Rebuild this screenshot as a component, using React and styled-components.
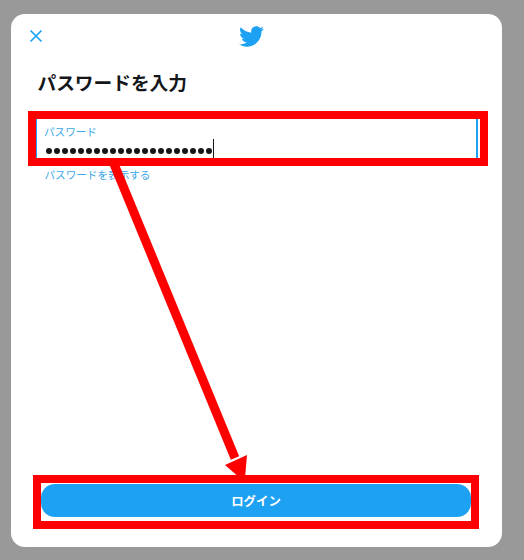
import React from "react";
import styled, { createGlobalStyle } from "styled-components";
import { FaTwitter } from "react-icons/fa";

const Global = createGlobalStyle`
  html, body {
    margin: 0;
    padding: 0;
    background: #999;
    font-family: "Liberation Sans", "Noto Sans CJK JP", sans-serif;
  }
`;

const Page = styled.div`
  position: relative;
  width: 524px;
  height: 560px;
  padding: 14px 22px 13px 11px;
  box-sizing: border-box;
  overflow: hidden;
  background: #999;
`;

const Card = styled.main`
  height: 100%;
  background: #fff;
  border-radius: 14px;
  padding: 0 0 18px 17px;
  box-sizing: border-box;
  display: flex;
  flex-direction: column;
`;

const Header = styled.header`
  height: 44px;
  display: flex;
  align-items: center;
  justify-content: center;
  position: relative;
  margin-left: -17px;
`;

const Close = styled.button`
  position: absolute;
  left: 17px;
  top: 14px;
  width: 16px;
  height: 16px;
  padding: 0;
  border: 0;
  background: none;
  display: flex;
`;

const Bird = styled(FaTwitter)`
  width: 25px;
  height: 25px;
  color: #1da1f2;
  margin-right: 11px;
`;

const Title = styled.h1`
  margin: 14px 0 0 9.5px;
  height: 24px;
  font-size: 18.7px;
  line-height: 24px;
  font-weight: 700;
  color: #14171a;
`;

const Frame = styled.div`
  border: 8px solid #f00;
  box-sizing: border-box;
  width: ${(p) => p.$width}px;
  height: ${(p) => p.$height}px;
  margin-top: ${(p) => p.$top || 0}px;
  margin-left: ${(p) => p.$offset}px;
  background: #fff;
`;

const Field = styled.div`
  height: 100%;
  margin-right: 2px;
  box-sizing: border-box;
  border-left: 1px solid #1da1f2;
  border-right: 2px solid #1da1f2;
  padding: 6px 0 0 7px;
`;

const FieldLabel = styled.div`
  font-size: 10.6px;
  line-height: 14px;
  color: #3ba6ea;
`;

const Dots = styled.div`
  display: flex;
  align-items: center;
  height: 19px;
  margin-left: 1.7px;
  gap: 2px;
`;

const Dot = styled.span`
  width: 6px;
  height: 6px;
  margin-top: 5px;
  border-radius: 50%;
  background: #14171a;
  flex: none;
`;

const Caret = styled.span`
  width: 1px;
  height: 19px;
  margin-left: -1px;
  background: #14171a;
  flex: none;
`;

const ShowLink = styled.a`
  margin: 1px 0 0 16.5px;
  font-size: 10.6px;
  line-height: 16px;
  color: #3ba6ea;
`;

const Spacer = styled.div`
  flex: 1;
`;

const LoginButton = styled.button`
  display: block;
  width: 100%;
  height: 33px;
  margin-top: 1px;
  border: 0;
  padding: 0;
  border-radius: 14px;
  background: #1da1f2;
  color: #fff;
  font-family: inherit;
  font-size: 12.4px;
  font-weight: 700;
`;

const Arrow = styled.svg`
  position: absolute;
  left: 0;
  top: 0;
  pointer-events: none;
`;

export default function App() {
  return (
    <Page>
      <Global />
      <Card>
        <Header>
          <Close aria-label="閉じる">
            <svg width="16" height="16" viewBox="0 0 16 16">
              <path d="M2.5 2.5l11 11M13.5 2.5l-11 11" stroke="#1da1f2" strokeWidth="1.7" fill="none" />
            </svg>
          </Close>
          <Bird />
        </Header>
        <Title>パスワードを入力</Title>
        <Frame $width={460} $height={55} $offset={0} $top={15}>
          <Field>
            <FieldLabel>パスワード</FieldLabel>
            <Dots>
              {Array.from({ length: 21 }).map((_, i) => (
                <Dot key={i} />
              ))}
              <Caret />
            </Dots>
          </Field>
        </Frame>
        <ShowLink>パスワードを表示する</ShowLink>
        <Spacer />
        <Frame $width={446} $height={54} $offset={5}>
          <LoginButton>ログイン</LoginButton>
        </Frame>
      </Card>
      <Arrow width="524" height="560" viewBox="0 0 524 560">
        <path d="M114 164L235 458" stroke="#f00" strokeWidth="9" fill="none" />
        <polygon points="225,465 247,455 245,478 240,478" fill="#f00" />
      </Arrow>
    </Page>
  );
}
